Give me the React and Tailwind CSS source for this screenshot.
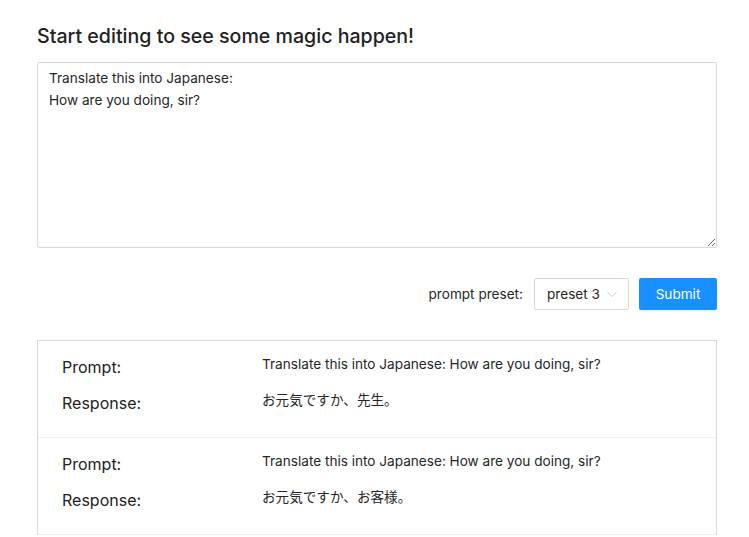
export default function App() {
  const items = [
    { p: "Translate this into Japanese: How are you doing, sir?", r: "お元気ですか、先生。" },
    { p: "Translate this into Japanese: How are you doing, sir?", r: "お元気ですか、お客様。" },
  ];
  return (
    <div className="min-h-screen bg-white text-[#262626]" style={{ fontFamily: 'Inter, "Noto Sans CJK JP", sans-serif' }}>
      <div className="w-[680px] ml-[37px] pt-[22px]">
        <h1 className="text-[19.6px] leading-[28px] font-medium text-[#222]">Start editing to see some magic happen!</h1>
        <textarea
          className="mt-[12px] block w-full h-[186px] border border-[#d9d9d9] rounded-[2px] px-[11px] py-[4px] text-[13.6px] leading-[22px] text-[#262626] outline-none resize-y"
          defaultValue={"Translate this into Japanese:\nHow are you doing, sir?"}
        />
        <div className="mt-[30px] flex items-center justify-end">
          <span className="text-[13.6px] text-[#262626] mr-[11px]">prompt preset:</span>
          <div className="w-[95px] h-[32px] border border-[#d9d9d9] rounded-[2px] flex items-center pl-[12px] pr-[10px] justify-between">
            <span className="text-[13.6px] text-[#262626]">preset 3</span>
            <svg width="12" height="12" viewBox="0 0 12 12" fill="none" stroke="#c4c4c4" strokeWidth="0.9">
              <path d="M1.5 4 L6 8.5 L10.5 4" />
            </svg>
          </div>
          <button className="ml-[10px] w-[78px] h-[32px] bg-[#1890ff] text-white text-[13.6px] rounded-[2px] shadow-[0_2px_0_rgba(0,0,0,0.045)]">Submit</button>
        </div>
        <div className="mt-[30px] border border-[#d9d9d9] border-b-0">
          {items.map((it, i) => (
            <div key={i} className="border-b border-[#f0f0f0] pl-[24px] pt-[13px] pb-[11px]">
              <div className="flex h-[36px] items-start">
                <div className="w-[200px] text-[16px] leading-[24px] pt-[1px] text-[#222]">Prompt:</div>
                <div className="text-[13.6px] leading-[20px] text-[#262626]">{it.p}</div>
              </div>
              <div className="flex h-[36px] items-start">
                <div className="w-[200px] text-[16px] leading-[24px] pt-[1px] text-[#222]">Response:</div>
                <div className="text-[13.6px] leading-[20px] text-[#262626]">{it.r}</div>
              </div>
            </div>
          ))}
        </div>
      </div>
    </div>
  );
}
